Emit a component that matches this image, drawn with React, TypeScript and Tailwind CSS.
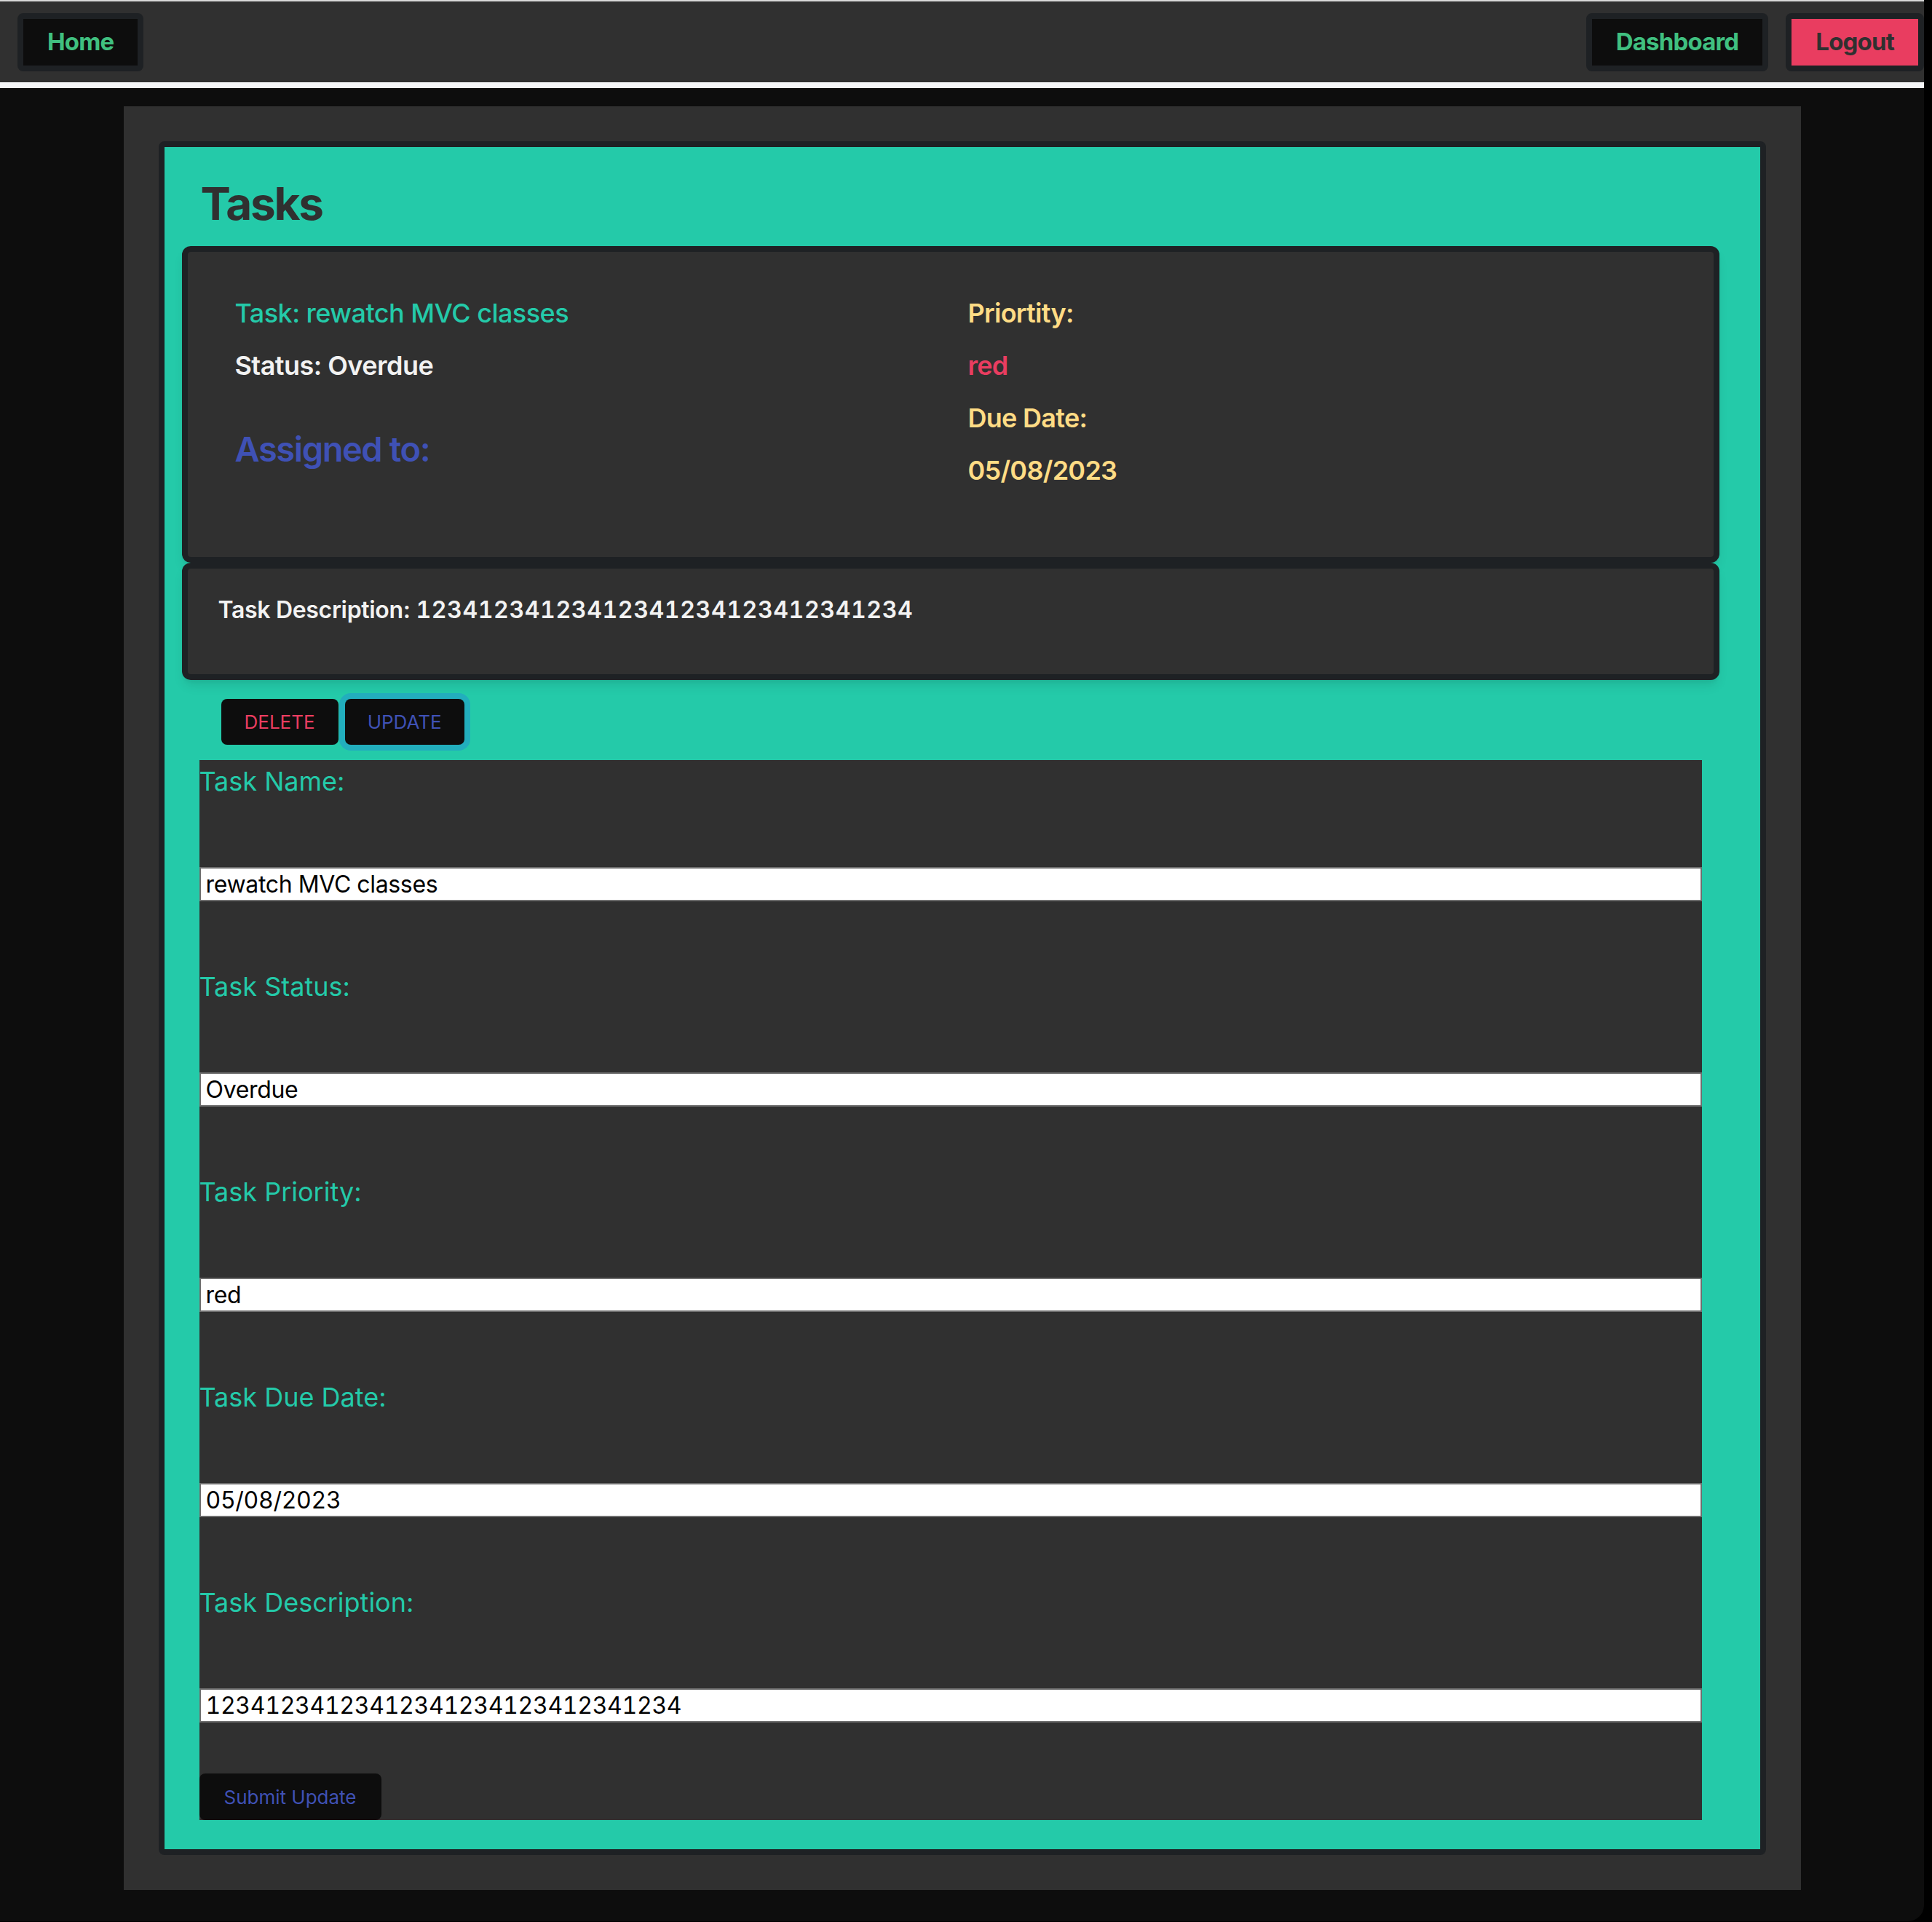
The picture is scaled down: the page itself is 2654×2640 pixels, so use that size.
import React from "react";

const fields = [
  { label: "Task Name:", value: "rewatch MVC classes" },
  { label: "Task Status:", value: "Overdue" },
  { label: "Task Priority:", value: "red" },
  { label: "Task Due Date:", value: "05/08/2023" },
  { label: "Task Description:", value: "12341234123412341234123412341234" },
];

function NavButton({ label, className }: { label: string; className: string }) {
  return (
    <button
      className={`h-[80px] px-[33px] border-[8px] border-[#1e2124] rounded-lg text-[33px] font-bold leading-none tracking-[-0.025em] ${className}`}
    >
      {label}
    </button>
  );
}

export default function App() {
  return (
    <div className="w-[2654px] h-[2640px] bg-black font-['Inter',sans-serif]">
      <div className="w-[2643px] h-[2639px] bg-[#0d0d0d] rounded-br-[22px] overflow-hidden">
        <div className="h-[2px] bg-[#d9d9d9]" />
        <nav className="h-[111px] bg-[#303030] flex items-center justify-between pl-[24px]">
          <NavButton label="Home" className="bg-[#0d0d0d] text-[#40c080]" />
          <div className="flex gap-[24px]">
            <NavButton label="Dashboard" className="bg-[#0d0d0d] text-[#40c080]" />
            <NavButton label="Logout" className="bg-[#e93d60] text-[#303030]" />
          </div>
        </nav>
        <div className="h-[8px] bg-[#f5f6f8]" />

        <main className="pt-[25px]">
          <div className="w-[2304px] mx-auto bg-[#303030] p-[48px]">
            <section className="border-[8px] border-[#1e2124] rounded-lg bg-[#24caa9] pt-[39px] pb-[40px]">
              <h1 className="pl-[50px] text-[62px] leading-[77px] font-bold tracking-[-0.035em] text-[#303030]">Tasks</h1>

              <div className="mt-[20px] ml-[24px] w-[2112px] border-[8px] border-[#1e2124] rounded-xl bg-[#303030] shadow-lg pt-[48px] pb-[83px] pl-[65px] flex">
                <div className="w-[1007px] text-[36px] leading-[72px] tracking-[-0.015em]">
                  <p className="font-medium text-[#24caa9]">Task: rewatch MVC classes</p>
                  <p className="font-semibold text-[#f2f2f2]">Status: Overdue</p>
                  <h2 className="mt-[43px] text-[47px] leading-[72px] font-semibold tracking-[-0.03em] text-[#3f51b5]">
                    Assigned to:
                  </h2>
                </div>
                <div className="text-[36px] leading-[72px] font-semibold tracking-[-0.02em]">
                  <p className="text-[#ffdc85]">Priortity:</p>
                  <p className="text-[#e93d60]">red</p>
                  <p className="text-[#ffdc85]">Due Date:</p>
                  <p className="text-[#ffdc85]">05/08/2023</p>
                </div>
              </div>

              <div className="ml-[24px] w-[2112px] border-[8px] border-[#1e2124] rounded-xl bg-[#303030] shadow-lg pt-[33px] pb-[64px] pl-[42px]">
                <p className="text-[32px] leading-[48px] font-semibold text-[#f2f2f2] tracking-[-0.01em]">
                  Task Description: <span className="tabular-nums tracking-[0.02em]">12341234123412341234123412341234</span>
                </p>
              </div>

              <div className="mt-[26px] ml-[78px] flex gap-[9px]">
                <button className="h-[63px] px-[32px] rounded-lg bg-[#0d0d0d] text-[26px] text-[#e93d60]">DELETE</button>
                <button className="h-[63px] px-[31px] rounded-lg bg-[#0d0d0d] text-[26px] text-[#3f51b5] ring-[8px] ring-[#22aebd]">
                  UPDATE
                </button>
              </div>

              <form className="mt-[21px] ml-[48px] w-[2064px] bg-[#303030] pt-[7px] flex flex-col">
                {fields.map((f, i) => (
                  <div key={f.label} className={i > 0 ? "mt-[95px]" : ""}>
                    <label className="block text-[36px] leading-[44px] text-[#24caa9]">{f.label}</label>
                    <input
                      readOnly
                      value={f.value}
                      className="mt-[96px] block w-full h-[47px] bg-white border-2 border-[#6e6e6e] px-[7px] text-[32px] text-black tabular-nums tracking-[-0.01em]"
                    />
                  </div>
                ))}
                <button
                  type="button"
                  className="mt-[70px] self-start h-[64px] w-[250px] rounded-lg bg-[#0d0d0d] text-[26px] text-[#3f51b5]"
                >
                  Submit Update
                </button>
              </form>
            </section>
          </div>
        </main>
      </div>
    </div>
  );
}
